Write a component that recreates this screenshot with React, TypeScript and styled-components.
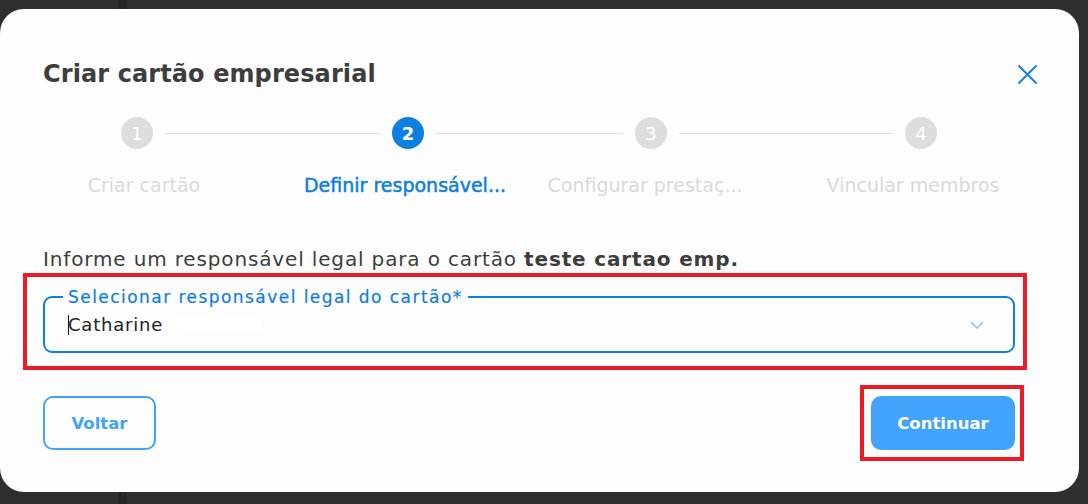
import React from "react";
import styled, { createGlobalStyle } from "styled-components";

const FONT = `"DejaVu Sans", Inter, "Open Sans", sans-serif`;

const GlobalStyle = createGlobalStyle`
  html, body {
    margin: 0;
    padding: 0;
  }
  body {
    width: 1088px;
    height: 504px;
    overflow: hidden;
    font-family: ${FONT};
    background: linear-gradient(
      90deg,
      #2f2f2f 118px,
      #262626 118px,
      #262626 127px,
      #2f2f2f 127px
    );
  }
`;

const Page = styled.div`
  display: flex;
  padding-top: 9px;
`;

const Modal = styled.div`
  width: 1079px;
  height: 483px;
  box-sizing: border-box;
  background: #fdfdfd;
  border-radius: 24px;
  padding: 50px 41px 0 43px;
  display: flex;
  flex-direction: column;
`;

const Header = styled.div`
  display: flex;
  justify-content: space-between;
  align-items: center;
  height: 30px;
`;

const Title = styled.h2`
  margin: 0;
  font-size: 24px;
  line-height: 30px;
  font-weight: 700;
  letter-spacing: 0.1px;
  color: #3d3d3d;
`;

const CloseButton = styled.button`
  border: 0;
  background: none;
  padding: 0;
  width: 21px;
  height: 21px;
  display: flex;
  cursor: pointer;
`;

const Track = styled.div`
  display: flex;
  align-items: center;
  margin-top: 28px;
  padding-left: 78px;
`;

const Circle = styled.div<{ $active?: boolean }>`
  width: 32px;
  height: 32px;
  border-radius: 50%;
  flex-shrink: 0;
  background: ${(p) => (p.$active ? "#0d7fe0" : "#dddddd")};
  color: #fff;
  font-size: 18px;
  font-weight: ${(p) => (p.$active ? 700 : 400)};
  display: flex;
  align-items: center;
  justify-content: center;
`;

const Connector = styled.div<{ $w: number }>`
  width: ${(p) => p.$w}px;
  height: 1px;
  margin: 0 12px;
  background: #d8e1ef;
  flex-shrink: 0;
`;

const Labels = styled.div`
  display: flex;
  margin-top: 24px;
  padding-left: 1px;
`;

const StepLabel = styled.div<{ $w: number; $active?: boolean }>`
  width: ${(p) => p.$w}px;
  flex-shrink: 0;
  display: flex;
  justify-content: center;
  white-space: nowrap;
  font-size: 19px;
  line-height: 24px;
  color: ${(p) => (p.$active ? "#0d7fe0" : "#dadada")};
  -webkit-text-stroke: ${(p) => (p.$active ? "0.5px #0d7fe0" : "0")};
`;

const Body = styled.div`
  padding-right: 23px;
  display: flex;
  flex-direction: column;
`;

const Intro = styled.p`
  margin: 49px 0 0;
  font-size: 20px;
  line-height: 26px;
  letter-spacing: 0.85px;
  color: #3d3d3d;
  white-space: nowrap;

  b {
    font-weight: 700;
  }
`;

const Highlight = styled.div<{ $m: string; $p: string }>`
  border: 4px solid #ec1c24;
  margin: ${(p) => p.$m};
  padding: ${(p) => p.$p};
`;

const Field = styled.fieldset`
  margin: 0;
  border: 2px solid #0d7fe0;
  border-radius: 9px;
  padding: 6px 29px 14px 23px;
  display: flex;
  align-items: center;
  justify-content: space-between;
`;

const Legend = styled.legend`
  padding: 0 5px;
  margin-left: -5px;
  font-size: 17px;
  line-height: 20px;
  letter-spacing: 1.45px;
  color: #0d7fe0;
  -webkit-text-stroke: 0.2px #0d7fe0;
  white-space: nowrap;
`;

const Value = styled.div`
  display: flex;
  align-items: center;
  font-size: 18px;
  line-height: 24px;
  letter-spacing: 0.8px;
  color: #222;
`;

const Caret = styled.span`
  width: 1px;
  height: 20px;
  background: #111;
  margin-right: -1px;
`;

const Redacted = styled.span`
  display: inline-block;
  width: 97px;
  height: 18px;
  margin-left: 2px;
  background: #ffffff;
`;

const Actions = styled.div`
  display: flex;
  justify-content: space-between;
  align-items: center;
  margin-top: 26px;
`;

const Button = styled.button<{ $primary?: boolean }>`
  width: ${(p) => (p.$primary ? 144 : 113)}px;
  height: 54px;
  box-sizing: border-box;
  border-radius: 10px;
  font-family: ${FONT};
  font-size: 16.5px;
  font-weight: 700;
  cursor: pointer;
  border: 2px solid #42a3fb;
  background: ${(p) => (p.$primary ? "#42a3fb" : "transparent")};
  color: ${(p) => (p.$primary ? "#ffffff" : "#42a3fb")};
  padding: 0;
`;

const steps = [
  { n: 1, label: "Criar cartão", w: 200, line: 215 },
  { n: 2, label: "Definir responsável...", w: 322, line: 187, active: true },
  { n: 3, label: "Configurar prestaç...", w: 158, line: 214 },
  { n: 4, label: "Vincular membros", w: 378 },
];

export default function App() {
  return (
    <>
      <GlobalStyle />
      <Page>
        <Modal>
          <Header>
            <Title>Criar cartão empresarial</Title>
            <CloseButton aria-label="Fechar">
              <svg width="21" height="21" viewBox="0 0 21 21">
                <path
                  d="M1.5 1.5 19.5 19.5M19.5 1.5 1.5 19.5"
                  stroke="#1a80e0"
                  strokeWidth="2"
                  fill="none"
                />
              </svg>
            </CloseButton>
          </Header>

          <Track>
            {steps.map((s) => (
              <React.Fragment key={s.n}>
                <Circle $active={s.active}>{s.n}</Circle>
                {s.line && <Connector $w={s.line} />}
              </React.Fragment>
            ))}
          </Track>
          <Labels>
            {steps.map((s) => (
              <StepLabel key={s.n} $w={s.w} $active={s.active}>
                {s.label}
              </StepLabel>
            ))}
          </Labels>

          <Body>
            <Intro>
              Informe um responsável legal para o cartão <b>teste cartao emp.</b>
            </Intro>

            <Highlight $m="1px -12px 0 -20px" $p="10px 8px 13px 16px">
              <Field>
                <Legend>Selecionar responsável legal do cartão*</Legend>
                <Value>
                  <Caret />
                  Catharine
                  <Redacted />
                </Value>
                <svg width="14" height="8" viewBox="0 0 14 8">
                  <path
                    d="M1 1 7 7 13 1"
                    stroke="#8fc3f2"
                    strokeWidth="1.6"
                    fill="none"
                  />
                </svg>
              </Field>
            </Highlight>

            <Actions>
              <Button>Voltar</Button>
              <Highlight $m="-11px -9px -11px -11px" $p="7px 5px 7px 7px">
                <Button $primary>Continuar</Button>
              </Highlight>
            </Actions>
          </Body>
        </Modal>
      </Page>
    </>
  );
}
